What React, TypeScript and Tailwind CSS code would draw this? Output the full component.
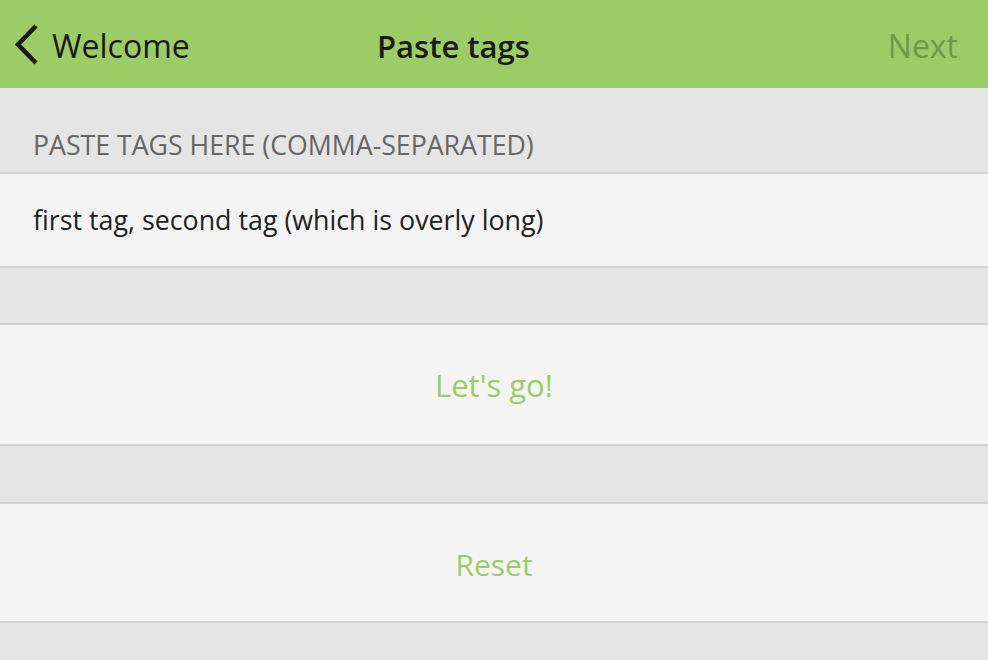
import React from 'react';

const Chevron = () => (
  <svg width="26" height="44" viewBox="0 0 26 44" className="shrink-0">
    <path d="M22 3 L4 21.5 L22 40" fill="none" stroke="#1a1a1a" strokeWidth={4.6} strokeLinejoin="miter" />
  </svg>
);

const App: React.FC = () => {
  return (
    <div className="w-[988px] h-[660px] overflow-hidden bg-[#e5e5e5] font-['Open_Sans',sans-serif]">
      {/* Header bar */}
      <div className="h-[88px] bg-[#9ccc65] flex items-center">
        <div className="w-[377px] flex items-center shrink-0">
          <div className="ml-[14px] mt-[1px]"><Chevron /></div>
          <span className="ml-[12px] mt-[4px] text-[32px] leading-none text-[#1a1a1a]">Welcome</span>
        </div>
        <span className="mt-[4px] text-[31px] leading-none font-semibold text-[#1a1a1a]">Paste tags</span>
        <div className="flex-1" />
        <span className="mr-[30px] mt-[4px] text-[32px] leading-none text-[#6e9946]">Next</span>
      </div>

      {/* Section label */}
      <div className="h-[84px] px-[33px] pt-[44px]">
        <div className="text-[26.7px] leading-none text-[#666666]">PASTE TAGS HERE (COMMA-SEPARATED)</div>
      </div>

      {/* Tag input */}
      <div className="h-[96px] border-y-2 border-[#d2d2d2] bg-[#f4f4f4] px-[33px] flex items-center">
        <span className="text-[26.8px] leading-none text-[#222222]">first tag, second tag (which is overly long)</span>
      </div>

      <div className="h-[55px]" />

      <button className="w-full h-[123px] border-y-2 border-[#d2d2d2] bg-[#f4f4f4] flex items-center justify-center">
        <span className="mt-[2px] text-[31px] leading-none text-[#9ccc65]">Let's go!</span>
      </button>

      <div className="h-[56px]" />

      <button className="w-full h-[121px] border-y-2 border-[#d2d2d2] bg-[#f4f4f4] flex items-center justify-center">
        <span className="mt-[4px] text-[30px] leading-none text-[#9ccc65]">Reset</span>
      </button>
    </div>
  );
};

export default App;
